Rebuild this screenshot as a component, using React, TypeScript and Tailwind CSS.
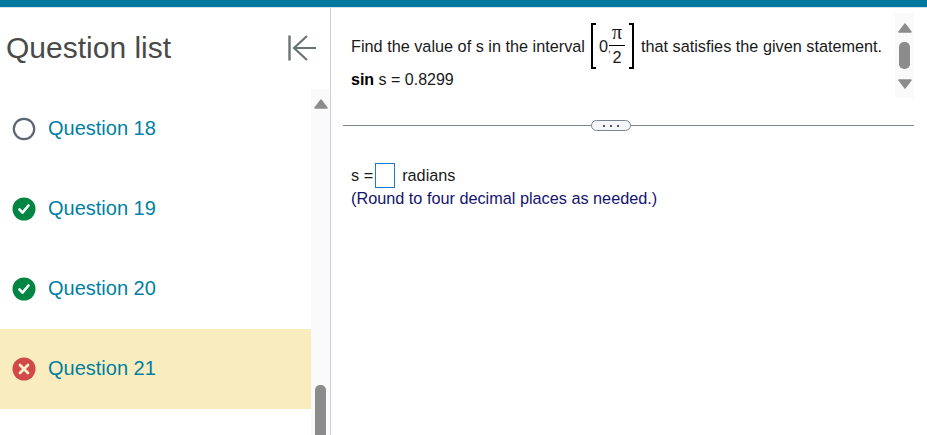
import React from "react";

const questions = [
  { label: "Question 18", status: "todo" },
  { label: "Question 19", status: "ok" },
  { label: "Question 20", status: "ok" },
  { label: "Question 21", status: "bad" },
];

const StatusIcon = ({ status }: { status: string }) => {
  if (status === "todo") {
    return (
      <svg width="24" height="24" viewBox="0 0 24 24" className="shrink-0">
        <circle cx="12" cy="12" r="10.2" fill="#fff" stroke="#5c6670" strokeWidth="2.2" />
      </svg>
    );
  }
  if (status === "ok") {
    return (
      <svg width="24" height="24" viewBox="0 0 24 24" className="shrink-0">
        <circle cx="12" cy="12" r="11.5" fill="#008542" />
        <path d="M7.500 12.500l3 3.200L16.500 8.500" fill="none" stroke="#fff" strokeWidth="2.6" strokeLinecap="round" strokeLinejoin="round" />
      </svg>
    );
  }
  return (
    <svg width="24" height="24" viewBox="0 0 24 24" className="shrink-0">
      <circle cx="12" cy="12" r="11.5" fill="#cf4a48" />
      <path d="M8 8l8 8M16 8l-8 8" fill="none" stroke="#fbeecb" strokeWidth="2.8" strokeLinecap="round" />
    </svg>
  );
};

const App: React.FC = () => {
  return (
    <div className="h-[435px] w-[927px] overflow-hidden bg-white font-['Liberation_Sans',Arial,sans-serif]">
      {/* Top bar */}
      <div className="h-2 border-b border-[#cfe3ea] bg-[#00789e]" />

      <div className="flex h-[427px]">
        {/* Question list */}
        <div className="flex w-[331px] shrink-0 flex-col border-r border-[#c7cfe0]">
          <div className="flex h-[81px] shrink-0 items-start justify-between pl-[6px] pr-[14px] pt-[24px]">
            <h1 className="text-[30px] leading-[32px] text-[#4a4a4a]">Question list</h1>
            <svg width="30" height="28" viewBox="0 0 30 28" className="mt-[2px]">
              <path d="M3.500 1.500v25" stroke="#6a7373" strokeWidth="2.400" fill="none" />
              <path d="M30 14H8M21 2L8 14 21 26" stroke="#6a7373" strokeWidth="2.200" fill="none" />
            </svg>
          </div>
          <div className="flex min-h-0 flex-1">
            <div className="min-w-0 flex-1">
              {questions.map((q) => (
                <div
                  key={q.label}
                  className={`flex h-20 items-center gap-3 pl-3 ${q.status === "bad" ? "bg-[#f9ecbe]" : ""}`}
                >
                  <StatusIcon status={q.status} />
                  <span className="mb-[2px] text-xl leading-6 text-[#007fa3]">{q.label}</span>
                </div>
              ))}
            </div>
            <div className="relative w-[19px] shrink-0 bg-[#fafafa]">
              <svg width="14" height="10" viewBox="0 0 14 10" className="absolute left-[3px] top-[10px]">
                <path d="M7 1L13 9H1Z" fill="#8c8c8c" stroke="#8c8c8c" strokeWidth="1.500" strokeLinejoin="round" />
              </svg>
              <div className="absolute left-[4px] top-[296px] h-[80px] w-[11px] rounded-t-[5px] bg-[#8c8c8c]" />
            </div>
          </div>
        </div>

        {/* Question */}
        <div className="min-w-0 flex-1">
          <div className="flex h-[117px] items-start pl-[12px] pr-[13px]">
            <div className="min-w-0 flex-1 pl-2 pt-[13px] text-[16.25px] text-[#1a1a1a]">
              <div className="flex h-[50px] items-center">
                <span>Find the value of s in the interval</span>
                <span className="ml-[6px] flex h-[46px] items-center">
                  <span className="h-[46px] w-[5px] border-y-2 border-l-2 border-black" />
                  <span className="ml-[3px] w-[10px] whitespace-nowrap">
                    0<span className="text-[10px]">,</span>
                  </span>
                  <span className="mb-[2px] flex w-[16px] flex-col text-center leading-[22px]">
                    <span className="h-[23px] border-b border-black font-['Liberation_Serif',serif] text-[20px] leading-[18px]">π</span>
                    <span>2</span>
                  </span>
                  <span className="ml-[4px] h-[46px] w-[5px] border-y-2 border-r-2 border-black" />
                </span>
                <span className="ml-[7px]">that satisfies the given statement.</span>
              </div>
              <div className="-mt-px text-base leading-5">
                <b className="text-black">sin</b> s = 0.8299
              </div>
            </div>
            <div className="mt-[5px] flex h-[85px] w-[19px] shrink-0 flex-col items-center bg-[#fafafa] pt-[10px]">
              <svg width="14" height="10" viewBox="0 0 14 10">
                <path d="M7 1L13 9H1Z" fill="#8c8c8c" stroke="#8c8c8c" strokeWidth="1.500" strokeLinejoin="round" />
              </svg>
              <div className="mt-[9px] h-[27px] w-[11px] rounded-[5px] bg-[#8c8c8c]" />
              <svg width="14" height="10" viewBox="0 0 14 10" className="mt-[10px]">
                <path d="M7 9L13 1H1Z" fill="#8c8c8c" stroke="#8c8c8c" strokeWidth="1.500" strokeLinejoin="round" />
              </svg>
            </div>
          </div>

          {/* Divider */}
          <div className="relative ml-[12px] mr-[13px] h-px bg-[#7b8490]">
            <div className="absolute left-[248px] top-[-5px] flex h-[11px] w-[40px] items-center justify-center gap-[5px] rounded-full border border-[#7b8490] bg-[#f4f6f8]">
              <span className="h-[2px] w-[2px] bg-[#4a5560]" />
              <span className="h-[2px] w-[2px] bg-[#4a5560]" />
              <span className="h-[2px] w-[2px] bg-[#4a5560]" />
            </div>
          </div>

          {/* Answer */}
          <div className="pl-5 pt-[35px] text-[16.25px]">
            <div className="flex h-[28px] items-center text-[#1a1a1a]">
              <span>s =</span>
              <span className="ml-[2px] h-[25px] w-5 border border-[#1f78c8]" />
              <span className="ml-[7px]">radians</span>
            </div>
            <div className="leading-[18px] text-[#14146e]">(Round to four decimal places as needed.)</div>
          </div>
        </div>
      </div>
    </div>
  );
};

export default App;
